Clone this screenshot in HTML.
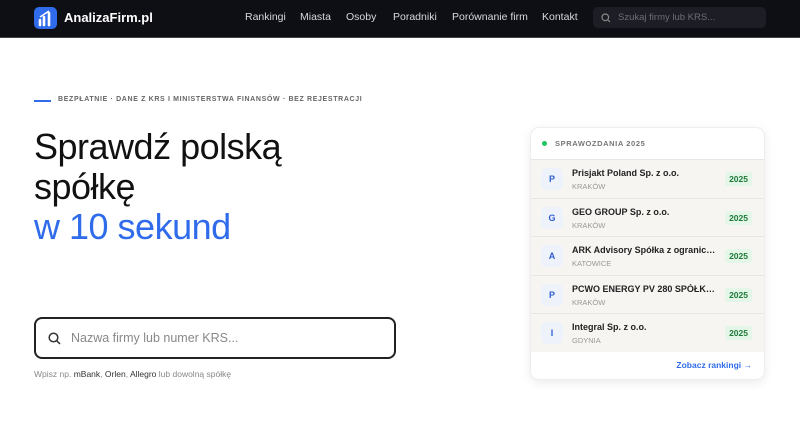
<!DOCTYPE html>
<html><head><meta charset="utf-8"><style>
*{margin:0;padding:0;box-sizing:border-box}
body{width:800px;height:445px;overflow:hidden;background:#fff;font-family:"Liberation Sans",sans-serif;position:relative}
.nav{position:absolute;left:0;top:0;width:800px;height:38px;background:#0e0e15;border-bottom:1px solid #444}
.logo{position:absolute;left:34px;top:7px;width:23px;height:22px;background:#2f6bea;border-radius:5px}
.brand{position:absolute;left:64px;top:10px;color:#fff;font-weight:bold;font-size:13px}
.links{position:absolute;top:11px;font-size:10.5px;color:#d8d8de}
.links span{position:absolute;white-space:nowrap}
.srch{position:absolute;left:593px;top:7px;width:173px;height:21px;background:#1d1d25;border-radius:5px;color:#6d6d78;font-size:9.5px;padding:5px 0 0 25px}
.eyebrow{position:absolute;left:34px;top:96px;font-size:7px;letter-spacing:.65px;color:#666;font-weight:bold;white-space:nowrap}
.eyebrow:before{content:"";position:absolute;left:0;top:4px;width:17px;height:2px;background:#2f6bea}
h1{position:absolute;left:34px;top:127px;font-size:36px;line-height:40px;font-weight:normal;color:#111;font-family:"Liberation Sans",sans-serif;letter-spacing:-.5px}
h1 .b{color:#2f6bea}
.inp{position:absolute;left:34px;top:317px;width:362px;height:42px;border:2px solid #222;border-radius:8px;color:#888;font-size:12.5px;padding:12px 0 0 35px}
.hint{position:absolute;left:34px;top:369px;font-size:8.5px;color:#888}
.hint b{color:#333;font-weight:normal}
.card{position:absolute;left:530px;top:127px;width:235px;height:253px;border:1px solid #eee;border-radius:9px;box-shadow:0 3px 10px rgba(0,0,0,.08);overflow:hidden;background:#fff}
.ch{height:31px;font-size:7.5px;font-weight:bold;color:#777;letter-spacing:.6px;padding:11px 0 0 24px;position:relative}
.ch:before{content:"";position:absolute;left:11px;top:13px;width:5px;height:5px;border-radius:50%;background:#22c55e}
.row{height:38.6px;background:#f6f5f2;border-top:1px solid #e8e6e2;position:relative}
.av{position:absolute;left:10px;top:8px;width:22px;height:22px;border-radius:5px;background:#eef2fb;color:#2f5fd0;font-weight:bold;font-size:9px;text-align:center;line-height:22px}
.nm{position:absolute;left:41px;top:8px;font-size:9px;font-weight:bold;color:#222;white-space:nowrap;max-width:146px;overflow:hidden;text-overflow:ellipsis}
.ct{position:absolute;left:41px;top:22px;font-size:7.5px;color:#999}
.yr{position:absolute;right:12px;top:12px;background:#e3f6e7;color:#1f7a3a;font-weight:bold;font-size:8.5px;padding:2px 4px;border-radius:3px}
.ft{position:absolute;right:12px;bottom:9px;font-size:8.5px;font-weight:bold;color:#2f6bea}
</style></head><body>
<div class="nav">
<div class="logo"><svg width="23" height="22" viewBox="0 0 23 22"><path d="M6 18v-5M10 18v-8M15 18V6" stroke="#fff" stroke-width="2.6" stroke-linecap="round"/><path d="M6 10l9-6" stroke="#fff" stroke-width="1.5"/></svg></div>
<div class="brand">AnalizaFirm.pl</div>
<div class="links"><span style="left:245px">Rankingi</span><span style="left:300px">Miasta</span><span style="left:346px">Osoby</span><span style="left:393px">Poradniki</span><span style="left:452px">Porównanie firm</span><span style="left:542px">Kontakt</span></div>
<div class="srch"><svg style="position:absolute;left:8px;top:6px" width="10" height="10" viewBox="0 0 10 10"><circle cx="4.3" cy="4.3" r="3.3" stroke="#888" stroke-width="1.2" fill="none"/><path d="M6.8 6.8L9 9" stroke="#888" stroke-width="1.2"/></svg>Szukaj firmy lub KRS...</div>
</div>
<div class="eyebrow"><span style="padding-left:24px">BEZPŁATNIE · DANE Z KRS I MINISTERSTWA FINANSÓW · BEZ REJESTRACJI</span></div>
<h1>Sprawdź polską<br>spółkę<br><span class="b">w 10 sekund</span></h1>
<div class="inp"><svg style="position:absolute;left:12px;top:13px" width="13" height="13" viewBox="0 0 13 13"><circle cx="5.5" cy="5.5" r="4.3" stroke="#333" stroke-width="1.5" fill="none"/><path d="M8.7 8.7L12 12" stroke="#333" stroke-width="1.5"/></svg>Nazwa firmy lub numer KRS...</div>
<div class="hint">Wpisz np. <b>mBank</b>, <b>Orlen</b>, <b>Allegro</b> lub dowolną spółkę</div>
<div class="card">
<div class="ch">SPRAWOZDANIA 2025</div>
<div class="row"><div class="av">P</div><div class="nm">Prisjakt Poland Sp. z o.o.</div><div class="ct">KRAKÓW</div><div class="yr">2025</div></div>
<div class="row"><div class="av">G</div><div class="nm">GEO GROUP Sp. z o.o.</div><div class="ct">KRAKÓW</div><div class="yr">2025</div></div>
<div class="row"><div class="av">A</div><div class="nm">ARK Advisory Spółka z ograniczo...</div><div class="ct">KATOWICE</div><div class="yr">2025</div></div>
<div class="row"><div class="av">P</div><div class="nm">PCWO ENERGY PV 280 SPÓŁKA Z ...</div><div class="ct">KRAKÓW</div><div class="yr">2025</div></div>
<div class="row"><div class="av">I</div><div class="nm">Integral Sp. z o.o.</div><div class="ct">GDYNIA</div><div class="yr">2025</div></div>
<div class="ft">Zobacz rankingi →</div>
</div>
</body></html>
